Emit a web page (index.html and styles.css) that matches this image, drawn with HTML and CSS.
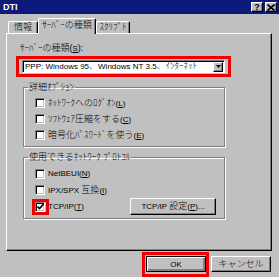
FILE: index.html
```html
<!DOCTYPE html>
<html lang="ja">
<head>
<meta charset="utf-8">
<link rel="stylesheet" href="styles.css">
</head>
<body>
<div class="window">
  <div class="titlebar">
    <span class="title">DTI</span>
    <div class="tbtns">
      <span class="tbtn">?</span>
      <span class="tbtn close">
        <svg width="8" height="7" viewBox="0 0 8 7"><path d="M0.5 0.5 L7.5 6.5 M7.5 0.5 L0.5 6.5" stroke="#000" stroke-width="1.6" fill="none"/></svg>
      </span>
    </div>
  </div>
  <div class="content">
    <div class="tabs">
      <div class="tab t1">情報</div>
      <div class="tab active t2">ｻｰﾊﾞｰの種類</div>
      <div class="tab t3">ｽｸﾘﾌﾟﾄ</div>
    </div>
    <div class="panel">
      <div class="label">ｻｰﾊﾞｰの種類(<u class="lt">S</u>):</div>
      <div class="hl combo-hl">
        <div class="combo">
          <span class="combo-text"><span class="lt">PPP: Windows 95</span>、<span class="lt">Windows NT 3.5</span>、ｲﾝﾀｰﾈｯﾄ</span>
          <span class="dd"><svg width="5" height="3" viewBox="0 0 5 3"><path d="M0 0 H5 L2.5 3 Z" fill="#000"/></svg></span>
        </div>
      </div>
      <fieldset class="group g1">
        <legend>詳細ｵﾌﾟｼｮﾝ</legend>
        <div class="row"><span class="cb"></span><span>ﾈｯﾄﾜｰｸへのﾛｸﾞｵﾝ<span class="lt">(<u>L</u>)</span></span></div>
        <div class="row"><span class="cb"></span><span>ｿﾌﾄｳｪｱ圧縮をする<span class="lt">(<u>C</u>)</span></span></div>
        <div class="row"><span class="cb"></span><span>暗号化ﾊﾟｽﾜｰﾄﾞを使う<span class="lt">(<u>E</u>)</span></span></div>
      </fieldset>
      <fieldset class="group g2">
        <legend>使用できるﾈｯﾄﾜｰｸ ﾌﾟﾛﾄｺﾙ</legend>
        <div class="row"><span class="cb"></span><span class="lt">NetBEUI(<u>N</u>)</span></div>
        <div class="row"><span class="cb"></span><span><span class="lt">IPX/SPX </span>互換<span class="lt">(<u>I</u>)</span></span></div>
        <div class="row last">
          <span class="mark"><span class="cb"><svg width="7" height="7" viewBox="0 0 7 7"><path d="M0.5 3.5 L2.5 5.5 L6.5 1" stroke="#000" stroke-width="1.6" fill="none"/></svg></span></span>
          <span class="lt">TCP/IP(<u>T</u>)</span>
          <button class="btn setbtn"><span class="lt">TCP/IP </span>設定<span class="lt">(<u>P</u>)...</span></button>
        </div>
      </fieldset>
    </div>
    <div class="footer">
      <div class="hl ok-hl"><button class="btn default"><span class="lt">OK</span></button></div>
      <button class="btn cancel">キャンセル</button>
    </div>
  </div>
</div>
</body>
</html>
```
FILE: styles.css
```css
* { box-sizing: border-box; }
html, body { margin: 0; padding: 0; }
body {
  width: 279px;
  height: 277px;
  overflow: hidden;
  background: #c0c0c0;
  font-family: "Liberation Sans", "Noto Sans CJK JP", sans-serif;
  font-size: 9px;
  font-weight: 300;
  line-height: 12px;
  color: #000;
}
.lt { font-size: 8px; }
.window {
  width: 279px;
  height: 277px;
  background: #c0c0c0;
}
.titlebar {
  height: 14px;
  background: #0c1a7c;
  display: flex;
  align-items: center;
  justify-content: space-between;
  padding: 0 2px 0 3px;
}
.title {
  color: #fff;
  font-family: "Liberation Sans", sans-serif;
  font-weight: bold;
  font-size: 9px;
}
.tbtns { display: flex; gap: 2px; }
.tbtn {
  width: 12px;
  height: 10px;
  background: #c0c0c0;
  border: 1px solid;
  border-color: #fff #000 #000 #fff;
  box-shadow: inset -1px -1px #808080;
  display: flex;
  align-items: center;
  justify-content: center;
  font-family: "Liberation Sans", sans-serif;
  font-weight: bold;
  font-size: 9px;
  line-height: 8px;
}
.content {
  padding: 4px 0 0 6px;
  width: 272px;
}
.tabs {
  height: 15px;
  display: flex;
  align-items: flex-end;
  padding-left: 2px;
}
.tab {
  height: 12px;
  border: 1px solid;
  border-bottom: none;
  border-color: #fff #000 #000 #fff;
  box-shadow: inset -1px 0 #808080;
  border-radius: 2px 2px 0 0;
  text-align: center;
  line-height: 11px;
  background: #c0c0c0;
}
.t1 { width: 30px; }
.t2 { width: 58px; }
.t3 { width: 34px; }
.tab.active {
  height: 16px;
  margin-bottom: -1px;
  line-height: 13px;
  position: relative;
  z-index: 1;
}
.panel {
  width: 266px;
  height: 218px;
  border: 1px solid;
  border-color: #fff #000 #000 #fff;
  box-shadow: inset -1px -1px #808080;
  padding-top: 8px;
}
.label { margin-left: 13px; }
u { text-decoration: underline; text-underline-offset: 1px; }
.hl { border: 3px solid #f00000; }
.combo-hl {
  margin: 1px 0 0 9px;
  width: 215px;
  height: 21px;
  padding: 1px 3px;
}
.combo {
  height: 13px;
  background: #fff;
  border: 1px solid;
  border-color: #808080 #fff #fff #808080;
  box-shadow: inset 1px 1px #000;
  display: flex;
  align-items: center;
  justify-content: space-between;
  padding: 0 1px 0 2px;
  white-space: nowrap;
  overflow: hidden;
}
.combo-text { line-height: 11px; }
.dd {
  width: 10px;
  height: 10px;
  flex: none;
  background: #c0c0c0;
  border: 1px solid;
  border-color: #fff #000 #000 #fff;
  box-shadow: inset -1px -1px #808080;
  display: flex;
  align-items: center;
  justify-content: center;
}
.group {
  margin: 4px 0 0 16px;
  width: 202px;
  border: 1px solid #808080;
  box-shadow: inset 1px 1px #fff, 1px 1px #fff;
  padding: 2px 0 3px 11px;
  min-width: 0;
}
.group legend {
  padding: 0 1px;
  margin-left: -7px;
  line-height: 12px;
}
.g2 { padding-top: 3px; padding-bottom: 3px; }
.row {
  height: 16px;
  display: flex;
  align-items: center;
  gap: 3px;
}
.row.last { height: 17px; padding-right: 8px; }
.cb {
  width: 10px;
  height: 10px;
  flex: none;
  background: #fff;
  border: 1px solid;
  border-color: #808080 #fff #fff #808080;
  box-shadow: inset 1px 1px #000, inset -1px -1px #c0c0c0;
  display: flex;
  align-items: center;
  justify-content: center;
}
.mark {
  display: flex;
  flex: none;
  border: 3px solid #f00000;
  padding-right: 1px;
  margin: -3px -4px -3px -3px;
}
.btn {
  font: inherit;
  color: #000;
  background: #c0c0c0;
  border: 1px solid;
  border-color: #fff #000 #000 #fff;
  box-shadow: inset -1px -1px #808080;
  padding: 0;
  margin: 0;
  line-height: 12px;
}
.setbtn {
  margin-left: auto;
  width: 86px;
  height: 17px;
}
.footer {
  margin-top: 1px;
  display: flex;
  justify-content: flex-end;
  gap: 2px;
  padding-right: 1px;
  width: 266px;
}
.ok-hl {
  width: 67px;
  height: 25px;
  padding: 1px 0 2px 1px;
}
.btn.default {
  width: 60px;
  height: 16px;
  border-color: #000;
  box-shadow: inset 1px 1px #fff, inset -2px -2px #808080;
}
.cancel {
  width: 60px;
  height: 16px;
  margin-top: 4px;
}
```
